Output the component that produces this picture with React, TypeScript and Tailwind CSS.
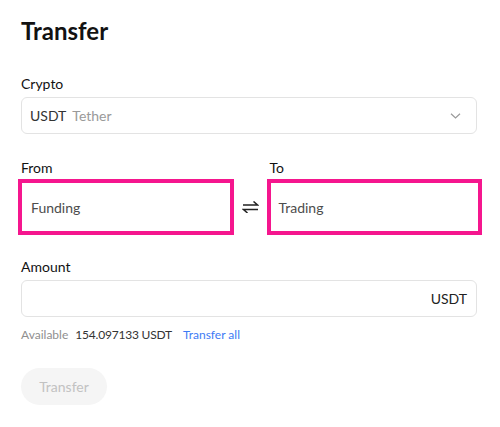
export default function App() {
  return (
    <div className="min-h-[427px] w-[500px] bg-white px-[21px] pt-[15px] font-['Lato',sans-serif] text-[#121212]">
      <h1 className="text-[24px] leading-[32px] font-bold">Transfer</h1>

      <div className="mt-[27px] text-[14px] leading-[20px]">Crypto</div>
      <button
        type="button"
        className="mt-[3px] flex h-[37px] w-[456px] items-center justify-between rounded-[6px] border border-[#e3e3e3] px-[8px]"
      >
        <span className="text-[14px]">
          <span className="text-[#333]">USDT</span>
          <span className="ml-[6px] text-[#9a9a9a]">Tether</span>
        </span>
        <svg width="11" height="6" viewBox="0 0 11 6" className="mr-[7px]">
          <path d="M1 0.8 L5.5 5 L10 0.8" fill="none" stroke="#9a9a9a" strokeWidth="1.2" />
        </svg>
      </button>

      <div className="mt-[24px] grid grid-cols-[1fr_39px_1fr] items-end">
        <div>
          <div className="text-[14px] leading-[20px]">From</div>
          <div className="mt-[4px] flex h-[50px] items-center border border-[#e3e3e3] px-[9px] text-[14px] text-[#4d4d4d] outline outline-[4px] outline-offset-[-1px] outline-[#f5168e]">
            Funding
          </div>
        </div>
        <div className="flex h-[50px] items-center justify-center">
          <svg width="17" height="12" viewBox="0 0 17 12">
            <path d="M1 4 H15.5 L11.5 0.5" fill="none" stroke="#222" strokeWidth="1.5" />
            <path d="M16 8.5 H1.5 L5.5 12" fill="none" stroke="#222" strokeWidth="1.5" />
          </svg>
        </div>
        <div>
          <div className="pl-[-1px] text-[14px] leading-[20px]">To</div>
          <div className="mt-[4px] flex h-[50px] items-center border border-[#e3e3e3] px-[8px] text-[14px] text-[#4d4d4d] outline outline-[4px] outline-offset-[-1px] outline-[#f5168e]">
            Trading
          </div>
        </div>
      </div>

      <div className="mt-[25px] text-[14px] leading-[20px]">Amount</div>
      <div className="mt-[3px] flex h-[37px] w-[456px] items-center justify-end rounded-[6px] border border-[#e3e3e3] px-[9px] text-[14px] text-[#222]">
        USDT
      </div>

      <div className="mt-[10px] flex items-center text-[12px] leading-[16px]">
        <span className="text-[#8f8f8f]">Available</span>
        <span className="ml-[7px] tracking-[-0.2px] text-[#333]">154.097133 USDT</span>
        <span className="ml-[11px] text-[#3d7bf5]">Transfer all</span>
      </div>

      <button
        type="button"
        className="mt-[25px] h-[37px] w-[86px] rounded-full bg-[#f5f5f5] text-[14px] text-[#c2c2c2]"
      >
        Transfer
      </button>
    </div>
  )
}
